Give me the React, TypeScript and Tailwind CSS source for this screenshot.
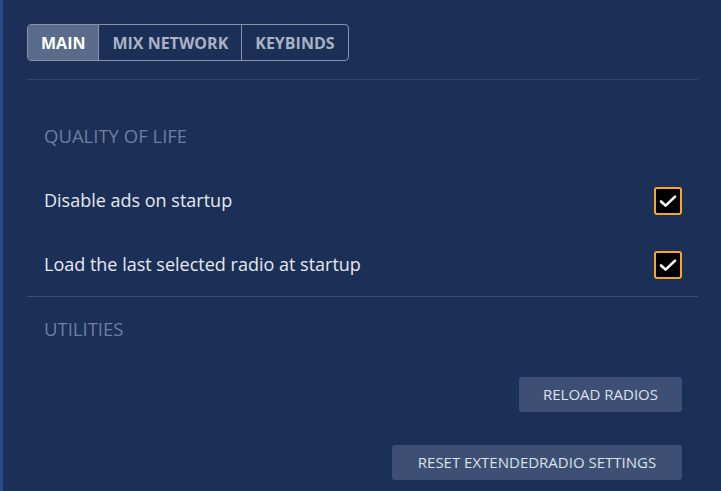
import React, { useState } from 'react';

function Check({ checked, onToggle }: { checked: boolean; onToggle: () => void }) {
  return (
    <button
      onClick={onToggle}
      className="w-[28px] h-[28px] rounded-[3px] border-2 border-[#f6a81f] bg-black flex items-center justify-center"
    >
      {checked && (
        <svg width="22" height="22" viewBox="0 0 22 22" fill="none">
          <path d="M4 11.5 L8.6 15.6 L18 6.6" stroke="white" strokeWidth="2.6" strokeLinecap="round" strokeLinejoin="round" />
        </svg>
      )}
    </button>
  );
}

export default function App() {
  const [tab, setTab] = useState('MAIN');
  const [ads, setAds] = useState(true);
  const [last, setLast] = useState(true);
  const tabs = ['MAIN', 'MIX NETWORK', 'KEYBINDS'];

  return (
    <div
      className="w-[721px] h-[491px] bg-[#1c2f56] border-l-[3px] border-[#284a84] overflow-hidden"
      style={{ fontFamily: '"Open Sans", "Liberation Sans", sans-serif' }}
    >
      <div className="pl-[24px] pr-[23px] pt-[24px]">
        <div className="flex">
          <div className="flex border-[1.5px] border-[#8a94a8] rounded-[4px] overflow-hidden h-[37px]">
            {tabs.map((t, i) => (
              <button
                key={t}
                onClick={() => setTab(t)}
                className={`h-full px-[13px] text-[16px] font-bold ${
                  i > 0 ? 'border-l-[1.5px] border-[#8a94a8]' : ''
                } ${tab === t ? 'bg-[#5a6b8b] text-white' : 'text-[#a9b3c5]'}`}
              >
                {t}
              </button>
            ))}
          </div>
        </div>
        <div className="mt-[18px] h-px bg-[#31466c]" />

        <div className="pl-[17px] pt-[47px] text-[18.5px] text-[#6d7f9d] leading-none">QUALITY OF LIFE</div>

        <div className="mt-[41px] flex items-center justify-between pl-[17px] pr-[16px] h-[28px]">
          <span className="text-[18px] text-[#e5e9f0]">Disable ads on startup</span>
          <Check checked={ads} onToggle={() => setAds(!ads)} />
        </div>
        <div className="mt-[36px] flex items-center justify-between pl-[17px] pr-[16px] h-[28px]">
          <span className="text-[18px] text-[#e5e9f0]">Load the last selected radio at startup</span>
          <Check checked={last} onToggle={() => setLast(!last)} />
        </div>

        <div className="mt-[17px] h-px bg-[#3a4f74]" />

        <div className="pl-[17px] pt-[23px] text-[18.5px] text-[#6d7f9d] leading-none">UTILITIES</div>

        <div className="mt-[39px] flex flex-col items-end gap-[33px] pr-[16px]">
          <button className="w-[163px] h-[35px] rounded-[3px] bg-[#3d5074] text-[15px] text-[#dbe0ea]">
            RELOAD RADIOS
          </button>
          <button className="w-[290px] h-[35px] rounded-[3px] bg-[#3d5074] text-[15px] text-[#dbe0ea]">
            RESET EXTENDEDRADIO SETTINGS
          </button>
        </div>
      </div>
    </div>
  );
}
